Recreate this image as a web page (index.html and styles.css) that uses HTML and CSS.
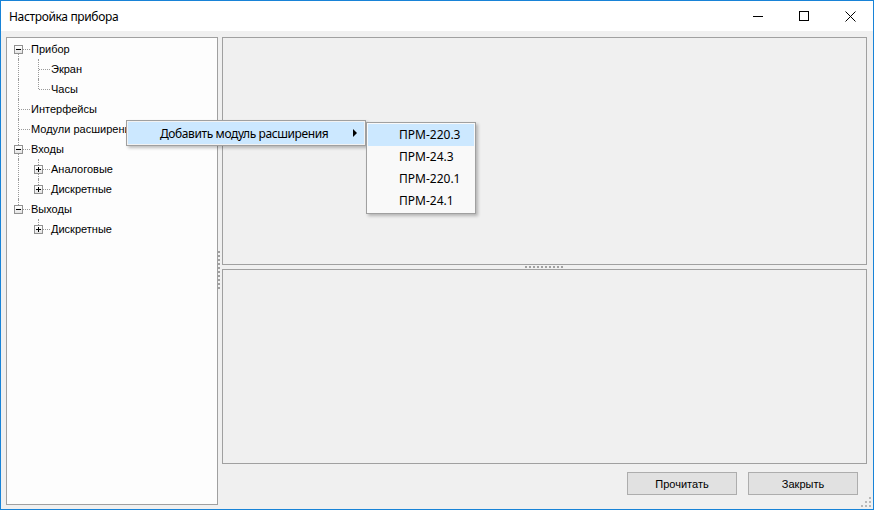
FILE: index.html
```html
<!DOCTYPE html>
<html lang="ru">
<head>
    <meta charset="UTF-8">
    <title>Настройка прибора</title>
    <link rel="stylesheet" href="styles.css">
</head>
<body>
    <div class="window">
        <div class="titlebar">
            <span class="title">Настройка прибора</span>
            <div class="caption-buttons">
                <span class="cap-btn">
                    <svg width="10" height="10" viewBox="0 0 10 10"><path d="M0 5.5H10" stroke="#000" stroke-width="1"/></svg>
                </span>
                <span class="cap-btn">
                    <svg width="10" height="10" viewBox="0 0 10 10"><rect x="0.5" y="0.5" width="9" height="9" fill="none" stroke="#000" stroke-width="1"/></svg>
                </span>
                <span class="cap-btn">
                    <svg width="11" height="11" viewBox="0 0 11 11"><path d="M0.5 0.5L10.5 10.5M10.5 0.5L0.5 10.5" stroke="#000" stroke-width="1"/></svg>
                </span>
            </div>
        </div>

        <div class="client">
            <div class="tree">
                <div class="row">
                    <span class="cell f"><span class="box minus"></span></span>
                    <span class="label">Прибор</span>
                </div>
                <div class="row">
                    <span class="cell v"></span>
                    <span class="cell t"></span>
                    <span class="label">Экран</span>
                </div>
                <div class="row">
                    <span class="cell v"></span>
                    <span class="cell l"></span>
                    <span class="label">Часы</span>
                </div>
                <div class="row">
                    <span class="cell t"></span>
                    <span class="label">Интерфейсы</span>
                </div>
                <div class="row">
                    <span class="cell t"></span>
                    <span class="label">Модули расширения</span>
                </div>
                <div class="row">
                    <span class="cell t"><span class="box minus"></span></span>
                    <span class="label">Входы</span>
                </div>
                <div class="row">
                    <span class="cell v"></span>
                    <span class="cell t"><span class="box plus"></span></span>
                    <span class="label">Аналоговые</span>
                </div>
                <div class="row">
                    <span class="cell v"></span>
                    <span class="cell l"><span class="box plus"></span></span>
                    <span class="label">Дискретные</span>
                </div>
                <div class="row">
                    <span class="cell l"><span class="box minus"></span></span>
                    <span class="label">Выходы</span>
                </div>
                <div class="row">
                    <span class="cell"></span>
                    <span class="cell l"><span class="box plus"></span></span>
                    <span class="label">Дискретные</span>
                </div>
            </div>

            <div class="vsplit"><span class="grip-v"></span></div>

            <div class="right">
                <div class="panel panel-top"></div>
                <div class="hsplit"><span class="grip-h"></span></div>
                <div class="panel panel-bottom"></div>
                <div class="buttons">
                    <button class="btn">Прочитать</button>
                    <button class="btn">Закрыть</button>
                </div>
            </div>
        </div>

        <div class="menu">
            <div class="menu-item active">
                <span>Добавить модуль расширения</span>
                <span class="arrow"></span>
            </div>
        </div>

        <div class="submenu">
            <div class="sub-item active">ПРМ-220.3</div>
            <div class="sub-item">ПРМ-24.3</div>
            <div class="sub-item">ПРМ-220.1</div>
            <div class="sub-item">ПРМ-24.1</div>
        </div>

        <svg class="size-grip" width="10" height="10" viewBox="0 0 10 10">
            <rect x="8" y="0" width="2" height="2" fill="#b8b8b8"/>
            <rect x="4" y="4" width="2" height="2" fill="#b8b8b8"/>
            <rect x="8" y="4" width="2" height="2" fill="#b8b8b8"/>
            <rect x="0" y="8" width="2" height="2" fill="#b8b8b8"/>
            <rect x="4" y="8" width="2" height="2" fill="#b8b8b8"/>
            <rect x="8" y="8" width="2" height="2" fill="#b8b8b8"/>
        </svg>
    </div>
</body>
</html>
```

FILE: styles.css
```css
body {
    margin: 0;
    padding: 0;
    background-color: #fff;
}

.window {
    position: relative;
    width: 874px;
    height: 510px;
    box-sizing: border-box;
    border: 1px solid #1883d7;
    background-color: #f0f0f0;
    display: flex;
    flex-direction: column;
    overflow: hidden;
}

.titlebar {
    height: 30px;
    background-color: #fff;
    display: flex;
    align-items: center;
    flex: none;
}

.title {
    font-family: "Noto Sans", sans-serif;
    font-size: 12px;
    letter-spacing: -0.35px;
    color: #000;
    padding-left: 8px;
    flex: 1;
}

.caption-buttons {
    display: flex;
    height: 30px;
}

.cap-btn {
    width: 46px;
    height: 30px;
    display: flex;
    align-items: center;
    justify-content: center;
}

.client {
    flex: 1;
    display: flex;
    padding: 6px 6px 4px 5px;
    min-height: 0;
}

/* tree */
.tree {
    width: 212px;
    box-sizing: border-box;
    border: 1px solid #a0a0a0;
    background-color: #fdfdfd;
    padding-top: 1px;
    flex: none;
    font-family: "Liberation Sans", Arial, sans-serif;
    font-size: 11px;
    color: #000;
}

.row {
    display: flex;
    align-items: center;
    height: 20px;
    white-space: nowrap;
}

.cell {
    position: relative;
    width: 20px;
    height: 20px;
    flex: none;
}

.cell.v::before,
.cell.t::before,
.cell.l::before,
.cell.f::before {
    content: "";
    position: absolute;
    left: 11px;
    top: 0;
    bottom: 0;
    border-left: 1px dotted #999;
}

.cell.l::before {
    bottom: 10px;
}

.cell.f::before {
    top: 10px;
}

.cell.t::after,
.cell.l::after,
.cell.f::after {
    content: "";
    position: absolute;
    left: 12px;
    top: 10px;
    width: 11px;
    border-top: 1px dotted #999;
}

.box {
    position: absolute;
    left: 7px;
    top: 6px;
    width: 9px;
    height: 9px;
    box-sizing: border-box;
    border: 1px solid #919191;
    background: linear-gradient(#ffffff, #e4e4e4);
    z-index: 1;
}

.box::before {
    content: "";
    position: absolute;
    left: 1px;
    top: 3px;
    width: 5px;
    height: 1px;
    background-color: #000;
}

.box.plus::after {
    content: "";
    position: absolute;
    left: 3px;
    top: 1px;
    width: 1px;
    height: 5px;
    background-color: #000;
}

.label {
    margin-left: 4px;
}

/* splitters */
.vsplit {
    width: 4px;
    flex: none;
    display: flex;
    align-items: center;
}

.grip-v {
    width: 2px;
    height: 40px;
    background: repeating-linear-gradient(to bottom, #a0a0a0 0 2px, transparent 2px 4px);
}

.right {
    flex: 1;
    display: flex;
    flex-direction: column;
}

.panel {
    box-sizing: border-box;
    border: 1px solid #a0a0a0;
    background-color: #f0f0f0;
}

.panel-top {
    height: 228px;
}

.hsplit {
    height: 4px;
    display: flex;
    justify-content: center;
    align-items: center;
}

.grip-h {
    width: 40px;
    height: 2px;
    background: repeating-linear-gradient(to right, #a0a0a0 0 2px, transparent 2px 4px);
}

.panel-bottom {
    height: 195px;
}

.buttons {
    display: flex;
    justify-content: flex-end;
    gap: 11px;
    padding: 8px 9px 0 0;
}

.btn {
    width: 110px;
    height: 23px;
    box-sizing: border-box;
    border: 1px solid #adadad;
    background-color: #e1e1e1;
    font-family: "Liberation Sans", Arial, sans-serif;
    font-size: 11px;
    color: #000;
    padding: 0;
}

/* context menu */
.menu {
    position: absolute;
    left: 125px;
    top: 119px;
    width: 240px;
    height: 26px;
    box-sizing: border-box;
    border: 1px solid #a0a0a0;
    background-color: #f2f2f2;
    padding: 1px;
    box-shadow: 2px 2px 3px rgba(0, 0, 0, 0.25);
    font-family: "Noto Sans", sans-serif;
    font-size: 12px;
}

.menu-item {
    height: 22px;
    display: flex;
    align-items: center;
    justify-content: space-between;
    padding: 0 7px 0 32px;
    letter-spacing: -0.4px;
}

.menu-item.active {
    background-color: #cce8ff;
}

.arrow {
    width: 0;
    height: 0;
    border-top: 4px solid transparent;
    border-bottom: 4px solid transparent;
    border-left: 4px solid #000;
}

.submenu {
    position: absolute;
    left: 365px;
    top: 121px;
    width: 110px;
    box-sizing: border-box;
    border: 1px solid #a0a0a0;
    background-color: #f9f9f9;
    padding: 1px;
    box-shadow: 2px 2px 3px rgba(0, 0, 0, 0.25);
    font-family: "Noto Sans", sans-serif;
    font-size: 12px;
}

.sub-item {
    height: 22px;
    line-height: 22px;
    padding-left: 31px;
}

.sub-item.active {
    background-color: #cce8ff;
}

.size-grip {
    position: absolute;
    right: 2px;
    bottom: 2px;
}
```
